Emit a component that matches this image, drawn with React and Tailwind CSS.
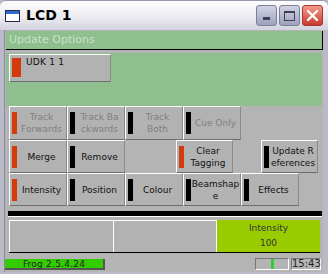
import React from "react";

const F = { fontFamily: '"DejaVu Sans", Verdana, sans-serif' };

function Btn({ w, ind, lines, disabled, empty }) {
  if (empty) return <div className={`${w} h-full`} />;
  return (
    <div
      className={`${w} h-full flex items-center bg-[#b2b2b2] border-t border-l border-white border-b border-r border-b-[#6e6e6e] border-r-[#8a8a8a]`}
    >
      <div className={`ml-[2px] w-[5px] h-[22px] shrink-0 ${ind === "red" ? "bg-[#d33a0c]" : "bg-black"}`} />
      <div
        className={`flex-1 text-center text-[9px] leading-[12px] whitespace-nowrap ${disabled ? "text-[#7f7f7f]" : "text-[#111]"}`}
      >
        {lines.map((l, i) => (
          <div key={i}>{l}</div>
        ))}
      </div>
    </div>
  );
}

export default function App() {
  return (
    <div className="w-[328px] h-[274px] bg-[#b9b9c8] flex flex-col overflow-hidden" style={F}>
      {/* Title bar */}
      <div className="h-[30px] shrink-0 flex items-center bg-gradient-to-b from-[#fdfdfe] via-[#eeeef3] to-[#d3d3de] rounded-t-[6px] border-t border-[#9a9aac]">
        <div className="ml-[5px] w-[15px] h-[12px] border border-[#2a2a40] bg-white flex flex-col">
          <div className="h-[3px] bg-[#2d6ad6]" />
        </div>
        <div className="ml-[6px] text-[14px] font-bold text-black" style={{ fontFamily: '"DejaVu Sans", sans-serif' }}>
          LCD 1
        </div>
        <div className="ml-auto mr-[5px] flex gap-[2px]">
          <div className="w-[21px] h-[21px] rounded-[3px] border border-[#7d7f97] bg-gradient-to-b from-[#d2d4e4] to-[#9ea1bc] flex items-end justify-center pb-[5px]">
            <div className="w-[7px] h-[3px] bg-[#3d3f56]" />
          </div>
          <div className="w-[21px] h-[21px] rounded-[3px] border border-[#7d7f97] bg-gradient-to-b from-[#d2d4e4] to-[#9ea1bc] flex items-center justify-center">
            <div className="w-[11px] h-[10px] border border-[#3d3f56] border-t-2" />
          </div>
          <div className="w-[21px] h-[21px] rounded-[3px] border border-[#a33a33] bg-gradient-to-b from-[#f49a8a] to-[#c8372a] flex items-center justify-center">
            <svg width="13" height="13" viewBox="0 0 13 13">
              <path d="M2 2 L11 11 M11 2 L2 11" stroke="white" strokeWidth="2.4" strokeLinecap="round" />
            </svg>
          </div>
        </div>
      </div>

      {/* Body */}
      <div className="flex-1 ml-[4px] mr-[5px] mb-[2px] bg-[#b4b4b4] border-l border-[#8a8aa0] flex flex-col">
        <div className="ml-[1px] mt-[1px] h-[19px] bg-[#8fbe8f] border-b border-r border-black text-[11px] leading-[18px] pl-[3px] text-[#c9e2c9]">
          Update Options
        </div>
        <div className="ml-[1px] mr-[1px] mt-[3px] h-[53px] bg-[#8fbe8f] pt-[1px] pl-[3px]">
          <div className="w-[102px] h-[28px] bg-[#b2b2b2] border-t border-l border-white border-b border-r border-b-[#6e6e6e] border-r-[#8a8a8a] flex items-start">
            <div className="ml-[2px] mt-[3px] w-[9px] h-[19px] bg-[#d33a0c]" />
            <div className="ml-[5px] mt-[1px] text-[9px] leading-[12px] text-[#111] tracking-wide">UDK 1 1</div>
          </div>
        </div>
        <div className="pl-[4px] flex flex-col">
          <div className="h-[34px] flex">
            <Btn w="w-[58px]" ind="red" lines={["Track", "Forwards"]} disabled />
            <Btn w="w-[58px]" ind="black" lines={["Track Ba", "ckwards"]} disabled />
            <Btn w="w-[58px]" ind="black" lines={["Track", "Both"]} disabled />
            <Btn w="w-[58px]" ind="black" lines={["Cue Only"]} disabled />
          </div>
          <div className="h-[33px] flex">
            <Btn w="w-[58px]" ind="red" lines={["Merge"]} />
            <Btn w="w-[58px]" ind="black" lines={["Remove"]} />
            <Btn w="w-[51px]" empty />
            <Btn w="w-[57px]" ind="red" lines={["Clear", "Tagging"]} />
            <Btn w="w-[28px]" empty />
            <Btn w="w-[57px]" ind="black" lines={["Update R", "eferences"]} />
          </div>
          <div className="h-[33px] flex">
            <Btn w="w-[58px]" ind="red" lines={["Intensity"]} />
            <Btn w="w-[58px]" ind="black" lines={["Position"]} />
            <Btn w="w-[58px]" ind="black" lines={["Colour"]} />
            <Btn w="w-[58px]" ind="black" lines={["Beamshap", "e"]} />
            <Btn w="w-[58px]" ind="black" lines={["Effects"]} />
          </div>
        </div>
        <div className="mt-[5px] ml-[3px] mr-[1px] h-[5px] bg-black" />
        <div className="ml-[3px] mr-[1px] h-[1px] bg-white" />
        <div className="mt-[3px] ml-[4px] mr-[3px] h-[33px] flex border-b border-black">
          <div className="w-[105px] h-full bg-[#b2b2b2] border-t border-l border-white border-r border-r-white" />
          <div className="w-[103px] h-full bg-[#b2b2b2] border-t border-white border-r" />
          <div className="flex-1 h-full bg-[#99cc00] flex flex-col items-center justify-center text-[9px] leading-[15px] text-[#333]">
            <div>Intensity</div>
            <div>100</div>
          </div>
        </div>
        <div className="mt-[4px] h-[14px] flex items-center">
          <div className="w-[100px] h-[11px] bg-[#33cc00] border-b-2 border-r-2 border-[#555] text-[9px] leading-[10px] text-center tracking-wide text-[#222]">
            Frog 2.5.4.24
          </div>
          <div className="ml-auto w-[34px] h-[12px] border-t border-l border-[#777] border-b border-r border-b-white border-r-white flex justify-center">
            <div className="w-[3px] h-full bg-[#33cc33]" />
          </div>
          <div className="ml-[2px] mr-[2px] w-[30px] h-[12px] border-t border-l border-[#777] border-b border-r border-b-white border-r-white text-[10px] leading-[10px] text-center text-[#222]">
            15:43
          </div>
        </div>
      </div>
    </div>
  );
}
